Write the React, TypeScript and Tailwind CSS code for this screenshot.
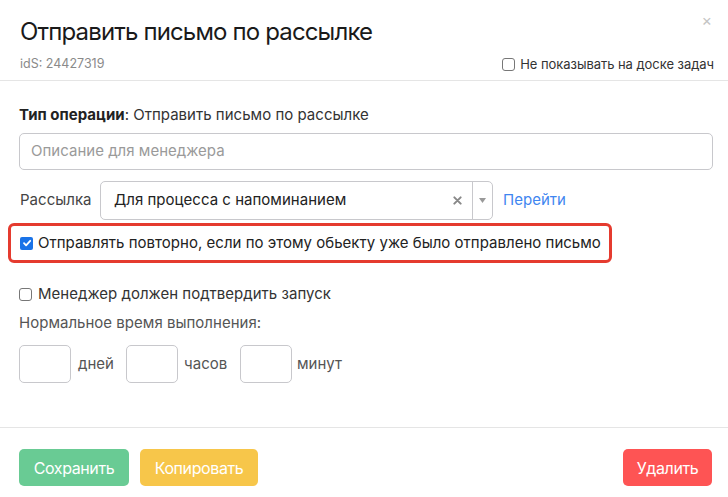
import React from "react";

export default function App() {
  return (
    <div className="w-[728px] h-[497px] bg-white overflow-hidden text-[#222]" style={{ fontFamily: "Inter, 'Noto Sans', sans-serif" }}>
      {/* header */}
      <div className="relative h-[81px] border-b border-[#e5e5e5] px-[20px]">
        <div className="pt-[16px] text-[24px] leading-[32px] tracking-[-0.85px] text-[#1a1a1a]">Отправить письмо по рассылке</div>
        <div className="absolute right-[16px] top-[12px] text-[#c4c4c4] text-[16px] leading-[16px]">×</div>
        <div className="mt-[7px] flex items-center justify-between">
          <span className="text-[12.5px] leading-[18px] text-[#8a8a8a] tracking-[0px]">idS: 24427319</span>
          <label className="flex items-center gap-[5px] text-[13px] leading-[18px] tracking-[-0.05px] text-[#333] mr-[-6px]">
            <span className="w-[13px] h-[13px] border border-[#777] rounded-[3px] bg-white"></span>
            Не показывать на доске задач
          </label>
        </div>
      </div>

      {/* body */}
      <div className="px-[19px] text-[15px] tracking-[0.02px]">
        <div className="mt-[24px] leading-[20px] text-[#333]">
          <span className="font-bold text-[#222]">Тип операции</span>: Отправить письмо по рассылке
        </div>
        <div className="mt-[8px] h-[37px] w-[694px] border border-[#c8c8cc] rounded-[5px] flex items-center px-[11px] text-[#9a9a9a]">
          Описание для менеджера
        </div>
        <div className="mt-[11px] flex items-center h-[39px]">
          <span className="w-[81px] pl-[1px] text-[#444]">Рассылка</span>
          <div className="w-[393px] h-[39px] border border-[#c8c8cc] rounded-[5px] flex items-center">
            <span className="flex-1 pl-[13px] text-[#222]">Для процесса с напоминанием</span>
            <svg width="9" height="9" viewBox="0 0 10 10" className="mr-[10px]">
              <path d="M1.5 1.5 L8.5 8.5 M8.5 1.5 L1.5 8.5" stroke="#888" strokeWidth="2.2" strokeLinecap="round" />
            </svg>
            <span className="h-[37px] w-px bg-[#c8c8cc]"></span>
            <svg width="7" height="5" viewBox="0 0 7 5" className="mx-[6px]">
              <path d="M0 0 L7 0 L3.5 5 Z" fill="#999" />
            </svg>
          </div>
          <span className="ml-[10px] text-[#3f86f0]">Перейти</span>
        </div>
        <div className="mt-[3px] -ml-[11px] w-[604px] h-[40px] border-[3px] border-[#e53b2f] rounded-[6px] flex items-center pl-[9px]">
          <span className="w-[13px] h-[13px] rounded-[2px] bg-[#1a73e8] flex items-center justify-center">
            <svg width="10" height="10" viewBox="0 0 10 10">
              <path d="M2 5.2 L4.1 7.3 L8.2 2.8" stroke="white" strokeWidth="1.8" fill="none" strokeLinecap="round" strokeLinejoin="round" />
            </svg>
          </span>
          <span className="ml-[5px] text-[#222] leading-[20px] whitespace-nowrap">Отправлять повторно, если по этому обьекту уже было отправлено письмо</span>
        </div>
        <div className="mt-[21px] flex items-center leading-[20px]">
          <span className="w-[13px] h-[13px] border border-[#777] rounded-[3px] bg-white"></span>
          <span className="ml-[6px] text-[#333]">Менеджер должен подтвердить запуск</span>
        </div>
        <div className="mt-[9px] leading-[20px] text-[#555]">Нормальное время выполнения:</div>
        <div className="mt-[12px] flex items-center">
          <div className="w-[52px] h-[38px] border border-[#c8c8cc] rounded-[5px]"></div>
          <span className="ml-[7px] w-[48px] text-[#555]">дней</span>
          <div className="w-[52px] h-[38px] border border-[#c8c8cc] rounded-[5px]"></div>
          <span className="ml-[6px] w-[56px] text-[#555]">часов</span>
          <div className="w-[52px] h-[38px] border border-[#c8c8cc] rounded-[5px]"></div>
          <span className="ml-[5px] text-[#555]">минут</span>
        </div>
      </div>

      {/* footer */}
      <div className="mt-[44px] border-t border-[#e5e5e5] px-[19px] pt-[21px] flex items-center text-[16px] tracking-[-0.4px] text-white">
        <div className="w-[110px] h-[37px] rounded-[5px] bg-[#69cb94] flex items-center justify-center">Сохранить</div>
        <div className="ml-[11px] w-[118px] h-[37px] rounded-[5px] bg-[#f7c64a] flex items-center justify-center">Копировать</div>
        <div className="ml-auto mr-[-3px] w-[89px] h-[37px] rounded-[5px] bg-[#fe5454] flex items-center justify-center">Удалить</div>
      </div>
    </div>
  );
}
